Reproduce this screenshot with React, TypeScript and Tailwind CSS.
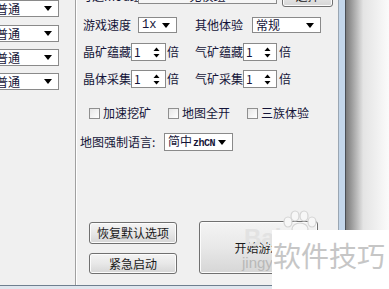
import React from 'react'

// Small black dropdown arrow
function DropArrow() {
  return (
    <svg width="8" height="5" viewBox="0 0 8 5" className="shrink-0">
      <polygon points="0,0 8,0 4,5" fill="#000" />
    </svg>
  )
}

function Select({ value, width, className = '' }: { value: React.ReactNode; width: string; className?: string }) {
  return (
    <div
      className={`${width} h-full bg-white border border-[#8a8a8a] flex items-center justify-between pl-[3px] pr-[6px] text-[12px] leading-none text-[#141438] ${className}`}
    >
      <span className="whitespace-nowrap">{value}</span>
      <DropArrow />
    </div>
  )
}

function Spinner({ width }: { width: string }) {
  return (
    <div className={`${width} h-full bg-white border border-[#8a8a8a] flex items-center justify-between pl-[2px] pr-[5px] text-[12px] leading-none text-[#141438]`}>
      <span>1</span>
      <svg width="7" height="11" viewBox="0 0 7 11">
        <polygon points="0.5,4 6.5,4 3.5,0.5" fill="#000" />
        <polygon points="0.5,7 6.5,7 3.5,10.5" fill="#000" />
      </svg>
    </div>
  )
}

function Check({ label }: { label: string }) {
  return (
    <div className="flex items-center">
      <div className="w-[11px] h-[11px] border border-[#8f8f8f] bg-gradient-to-br from-[#e6e6e6] to-white" />
      <span className="ml-[3px] text-[12px] leading-none text-[#141438] whitespace-nowrap">{label}</span>
    </div>
  )
}

function WinButton({ children, className = '' }: { children: React.ReactNode; className?: string }) {
  return (
    <div
      className={`rounded-[3px] border border-[#707070] bg-gradient-to-b from-[#f4f4f4] via-[#e8e8e8] to-[#d6d6d6] shadow-[inset_0_0_0_1px_#fcfcfc] flex items-center justify-center text-[12px] leading-none text-[#1a1a1a] whitespace-nowrap ${className}`}
    >
      {children}
    </div>
  )
}

const levels = ['普通', '普通', '普通', '普通']

export default function App() {
  return (
    <div className="w-[389px] h-[289px] relative overflow-hidden bg-white flex flex-col font-['Noto_Sans_CJK_SC','Noto_Sans',sans-serif]">
      <div className="flex h-[285px]">
        {/* Window client area */}
        <div className="w-[338px] bg-[#f0f0f0] flex">
          {/* Left column of difficulty dropdowns (cut off) */}
          <div className="w-[75px] flex flex-col">
            {levels.map((l, i) => (
              <div
                key={i}
                className={`h-[17px] ml-[-10px] ${i === 0 ? 'mt-0' : i === 1 ? 'mt-[8px]' : 'mt-[7px]'}`}
              >
                <Select value={l} width="w-[69px]" className="pl-[5px]" />
              </div>
            ))}
          </div>

          {/* Separator */}
          <div className="w-[1px] bg-[#a0a0a0]" />
          <div className="w-[1px] bg-white" />

          {/* Right panel */}
          <div className="flex-1 flex flex-col pl-[6px]">
            {/* Mod row (cut off at top) */}
            <div className="mt-[-16px] h-[23px] flex items-start">
              <span className="mt-[4px] ml-[-3px] w-[58px] text-[12px] leading-[16px] text-[#141438] whitespace-nowrap overflow-hidden">可选mod组:</span>
              <div className="w-[139px] h-[20px] border border-[#8a8a8a] bg-[#f6f6f6] flex items-end justify-center pb-[1px] text-[12px] leading-none text-[#141438]">
                无模组
              </div>
              <WinButton className="ml-[5px] w-[51px] h-[23px] items-end pb-[4px]">选择</WinButton>
            </div>

            {/* Speed row */}
            <div className="mt-[10px] h-[16px] flex items-center text-[12px] leading-none text-[#141438]">
              <span className="w-[55px]">游戏速度</span>
              <Select value="1x" width="w-[39px]" className="font-['Liberation_Mono',monospace]" />
              <span className="ml-[18px] w-[57px]">其他体验</span>
              <Select value="常规" width="w-[69px]" />
            </div>

            {/* Crystal / gas reserves */}
            <div className="mt-[10px] h-[18px] flex items-center text-[12px] leading-none text-[#141438]">
              <span className="w-[48px]">晶矿蕴藏</span>
              <Spinner width="w-[35px]" />
              <span className="ml-[1px]">倍</span>
              <span className="ml-[16px] w-[48px]">气矿蕴藏</span>
              <Spinner width="w-[34px]" />
              <span className="ml-[2px]">倍</span>
            </div>

            {/* Harvest rates */}
            <div className="mt-[9px] h-[18px] flex items-center text-[12px] leading-none text-[#141438]">
              <span className="w-[48px]">晶体采集</span>
              <Spinner width="w-[35px]" />
              <span className="ml-[1px]">倍</span>
              <span className="ml-[16px] w-[48px]">气矿采集</span>
              <Spinner width="w-[34px]" />
              <span className="ml-[2px]">倍</span>
            </div>

            {/* Checkboxes */}
            <div className="mt-[19px] h-[12px] flex items-center ml-[6px] gap-[17px]">
              <Check label="加速挖矿" />
              <Check label="地图全开" />
              <Check label="三族体验" />
            </div>

            {/* Map language */}
            <div className="mt-[14px] h-[18px] flex items-center text-[12px] leading-none text-[#141438]">
              <span className="ml-[-3px] w-[84px] whitespace-nowrap">地图强制语言:</span>
              <Select
                value={
                  <>
                    简中<span className="ml-[1px] font-['Liberation_Mono',monospace] font-bold text-[10px] tracking-[-0.5px]">zhCN</span>
                  </>
                }
                width="w-[69px]"
                className="pr-[4px]"
              />
            </div>

            {/* Action buttons */}
            <div className="mt-[70px] flex items-start ml-[6px]">
              <div className="flex flex-col mt-[1px] gap-[9px]">
                <WinButton className="w-[88px] h-[22px]">恢复默认选项</WinButton>
                <WinButton className="w-[88px] h-[21px]">紧急启动</WinButton>
              </div>
              <WinButton className="ml-[22px] w-[119px] h-[53px] text-[#000]">开始游戏</WinButton>
            </div>
          </div>
        </div>

        {/* Window frame, right edge */}
        <div className="w-[1px] bg-[#9aa6b2]" />
        <div className="w-[6px] bg-[#c3d6ea]" />
        <div className="w-[1px] bg-[#4a4f55]" />
        <div className="flex-1 bg-gradient-to-r from-[#7a7a7a] via-[#e4e4e4] via-40% to-[#fbfbfb]" />
      </div>
      <div className="h-[1px] bg-[#6f7f8f]" />
      <div className="flex-1 bg-[#dfe6ee]" />

      {/* Watermark overlay */}
      <svg className="absolute left-[282px] top-[210px]" width="36" height="24" viewBox="0 0 36 24">
        <g fill="#f7f7f7" stroke="#d4d4d4" strokeWidth="1.2">
          <ellipse cx="6" cy="12" rx="4" ry="5" />
          <ellipse cx="13" cy="6" rx="4" ry="5" />
          <ellipse cx="22" cy="6" rx="4" ry="5" />
          <ellipse cx="30" cy="12" rx="4" ry="5" />
          <ellipse cx="18" cy="19" rx="8" ry="6" />
        </g>
      </svg>
      <span className="absolute left-[244px] top-[226px] text-[24px] leading-none font-bold text-[#e2e2e2] font-['Liberation_Sans',sans-serif]">
        Bai
      </span>
      <span className="absolute left-[242px] top-[255px] text-[15px] leading-none text-[#b8b8b8] font-['Liberation_Sans',sans-serif]">
        jingy
      </span>
      <div className="absolute left-[272px] top-[230px] w-[117px] h-[59px] bg-white pl-[1px] pt-[11px] text-[28px] leading-[28px] text-[#c6c6c6] whitespace-nowrap">
        软件技巧
      </div>
    </div>
  )
}
